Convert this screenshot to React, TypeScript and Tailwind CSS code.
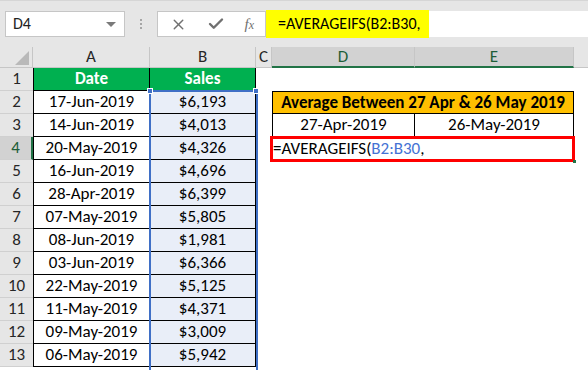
import { X, Check } from 'lucide-react';

const rows: [string, string][] = [
  ['17-Jun-2019', '$6,193'],
  ['14-Jun-2019', '$4,013'],
  ['20-May-2019', '$4,326'],
  ['16-Jun-2019', '$4,696'],
  ['28-Apr-2019', '$6,399'],
  ['07-May-2019', '$5,805'],
  ['08-Jun-2019', '$1,981'],
  ['03-Jun-2019', '$6,366'],
  ['22-May-2019', '$5,125'],
  ['11-May-2019', '$4,371'],
  ['09-May-2019', '$3,009'],
  ['06-May-2019', '$5,942'],
];

const font = "font-['Carlito','Lato','Liberation_Sans',sans-serif]";

const FormulaBar = () => (
  <div className="flex h-[47px] items-center border-t border-[#d6d6d6] bg-[#e6e6e6] pl-[5px]">
    <div className="flex h-[26px] w-[120px] items-center justify-between border border-[#c6c6c6] bg-white pl-[7px] pr-[8px]">
      <span className="text-[16px] text-[#222]">D4</span>
      <span className="h-0 w-0 border-x-[5px] border-t-[5px] border-x-transparent border-t-[#7a7a7a]" />
    </div>
    <div className="flex w-[32px] flex-col items-center gap-[2px]">
      <span className="h-[2px] w-[2px] bg-[#a6a6a6]" />
      <span className="h-[2px] w-[2px] bg-[#a6a6a6]" />
      <span className="h-[2px] w-[2px] bg-[#a6a6a6]" />
    </div>
    <div className="flex h-[26px] w-[109px] items-center justify-between border border-[#c6c6c6] bg-white pl-[12px] pr-[11px]">
      <X size={17} strokeWidth={2} className="text-[#707070]" />
      <Check size={18} strokeWidth={3.2} className="text-[#707070]" />
      <span className="font-['Liberation_Serif',serif] text-[15px] italic text-[#707070]">
        f<span className="text-[12px]">x</span>
      </span>
    </div>
    <div className="flex h-[28px] w-[163px] items-center bg-[#ffff00] pl-[12px] text-[16px] text-black">
      =AVERAGEIFS(B2:B30,
    </div>
    <div className="h-[26px] flex-1 bg-white" />
  </div>
);

const ColHeader = ({ label, active, w }: { label: string; active?: boolean; w: string }) => (
  <div
    className={`flex items-center justify-center border-r border-[#c6c6c6] text-[17px] ${w} ${
      active ? 'border-b-2 border-b-[#217346] bg-[#d2d2d2] text-[#1e5e38]' : 'border-b border-b-[#c6c6c6] bg-[#e6e6e6] text-[#262626]'
    }`}
  >
    {label}
  </div>
);

const RowHeader = ({ n, active }: { n: number; active?: boolean }) => (
  <div
    className={`flex h-[23px] w-[33px] items-center justify-center border-b border-[#d0d0d0] text-[17px] ${
      active ? 'border-r-2 border-r-[#217346] bg-[#d2d2d2] text-[#1e5e38]' : 'bg-[#e6e6e6] text-[#262626]'
    }`}
  >
    {n}
  </div>
);

export default function App() {
  return (
    <div className={`h-[370px] w-[588px] overflow-hidden bg-white ${font}`}>
      <FormulaBar />
      <div className="relative">
        <div className="flex h-[21px]">
          <div className="relative w-[33px] border-r border-b border-[#c6c6c6] bg-[#e6e6e6]">
            <span className="absolute right-[3px] bottom-[2px] h-0 w-0 border-l-[14px] border-l-transparent [border-bottom:14px_solid_#b9b9b9]" />
          </div>
          <ColHeader label="A" w="w-[117px]" />
          <ColHeader label="B" w="w-[106px]" />
          <ColHeader label="C" w="w-[16px]" />
          <ColHeader label="D" w="w-[143px]" active />
          <ColHeader label="E" w="w-[159px]" active />
          <div className="flex-1 border-b border-[#c6c6c6] bg-[#e6e6e6]" />
        </div>

        <div className="flex">
          <div className="flex flex-col">
            {Array.from({ length: 13 }, (_, i) => (
              <RowHeader key={i} n={i + 1} active={i === 3} />
            ))}
          </div>

          <div className="flex flex-col text-[17px] text-black">
            <div className="flex h-[23px] border-b border-black font-bold text-white">
              <div className="flex w-[117px] items-center justify-center border-x border-black bg-[#00b050]">Date</div>
              <div className="flex w-[106px] items-center justify-center border-r border-black bg-[#00b050]">Sales</div>
            </div>
            {rows.map(([d, s]) => (
              <div key={d} className="flex h-[23px] border-b border-black">
                <div className="flex w-[117px] items-center justify-center border-x border-black">{d}</div>
                <div className="flex w-[106px] items-center justify-center border-r border-black bg-[#e9eef8]">{s}</div>
              </div>
            ))}
          </div>

          <div className="w-[16px]" />

          <div className="flex flex-col text-[17px] text-black">
            <div className="h-[23px]" />
            <div className="flex h-[23px] w-[302px] items-center justify-center border border-black bg-[#ffc000] font-bold">
              Average Between 27 Apr &amp; 26 May 2019
            </div>
            <div className="flex h-[23px] border-b border-black">
              <div className="flex w-[143px] items-center justify-center border-x border-black">27-Apr-2019</div>
              <div className="flex w-[159px] items-center justify-center border-r border-black">26-May-2019</div>
            </div>
            <div className="relative flex h-[23px] w-[302px] items-center pl-[1px]">
              <span>
                =AVERAGEIFS(<span className="text-[#4472d4]">B2:B30</span>,
              </span>
              <div className="absolute -top-[1px] -right-[1px] -bottom-[2px] -left-[2px] border-[3px] border-[#ff0000]" />
              <div className="absolute -right-[2px] -bottom-[3px] h-[3px] w-[3px] bg-[#217346]" />
            </div>
          </div>
        </div>

        {/* B column selection */}
        <div className="absolute top-[43px] left-[149px] h-[300px] w-[109px] border-2 border-[#3f6fc6]" />
        <div className="absolute top-[41px] left-[147px] h-[6px] w-[6px] border border-white bg-[#3f6fc6]" />
        <div className="absolute top-[41px] left-[253px] h-[6px] w-[6px] border border-white bg-[#3f6fc6]" />
      </div>
    </div>
  );
}
